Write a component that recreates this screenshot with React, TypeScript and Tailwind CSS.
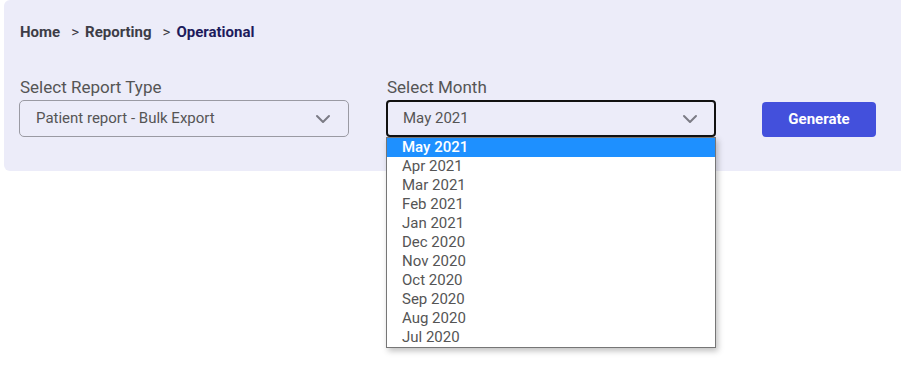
const months = [
  'May 2021',
  'Apr 2021',
  'Mar 2021',
  'Feb 2021',
  'Jan 2021',
  'Dec 2020',
  'Nov 2020',
  'Oct 2020',
  'Sep 2020',
  'Aug 2020',
  'Jul 2020',
];

function Chevron() {
  return (
    <svg width="16" height="10" viewBox="0 0 16 10" fill="none" className="shrink-0">
      <path d="M2 2l6 6 6-6" stroke="#7b7b85" strokeWidth="2" strokeLinecap="round" strokeLinejoin="round" />
    </svg>
  );
}

export default function App() {
  return (
    <div className="min-h-[372px] bg-white font-['Roboto',sans-serif]">
      <div className="ml-1 h-[171px] rounded-l-md bg-[#ececf9] pl-4 pt-[23px]">
        <div className="flex items-center text-[15px] font-bold leading-[18px]">
          <span className="text-[#3d3d47]">Home</span>
          <span className="ml-[11px] font-normal text-[#3d3d47]">&gt;</span>
          <span className="ml-[6px] text-[#3d3d47]">Reporting</span>
          <span className="ml-[11px] font-normal text-[#3d3d47]">&gt;</span>
          <span className="ml-[6px] text-[#1d1b5c]">Operational</span>
        </div>

        <div className="mt-[36px] flex items-start">
          <div className="w-[330px] -ml-px">
            <div className="pl-px text-[17px] leading-[20px] text-[#555]">Select Report Type</div>
            <div className="mt-[3px] flex h-[37px] items-center justify-between rounded-[5px] border border-[#9a9aa3] pl-4 pr-[17px] text-[15px] text-[#555]">
              <span>Patient report - Bulk Export</span>
              <Chevron />
            </div>
          </div>

          <div className="relative ml-[37px] w-[330px]">
            <div className="pl-px text-[17px] leading-[20px] text-[#555]">Select Month</div>
            <div className="mt-[3px] flex h-[37px] items-center justify-between rounded-[4px] border-2 border-[#111] pl-[15px] pr-4 text-[15px] text-[#555]">
              <span>May 2021</span>
              <Chevron />
            </div>
            <ul className="absolute left-0 top-full z-10 w-[330px] border border-[#767676] bg-white shadow-[2px_3px_6px_rgba(0,0,0,0.25)]">
              {months.map((m, i) => (
                <li
                  key={m}
                  className={
                    i === 0
                      ? 'h-[19px] bg-[#1e90ff] pl-[15px] text-[15px] leading-[19px] font-medium text-white'
                      : 'h-[19px] pl-[15px] text-[15px] leading-[19px] text-[#555]'
                  }
                >
                  {m}
                </li>
              ))}
            </ul>
          </div>

          <button className="ml-[46px] mt-[25px] h-[35px] w-[114px] rounded-[4px] bg-[#4350dc] text-[15px] font-bold text-white">
            Generate
          </button>
        </div>
      </div>
    </div>
  );
}
